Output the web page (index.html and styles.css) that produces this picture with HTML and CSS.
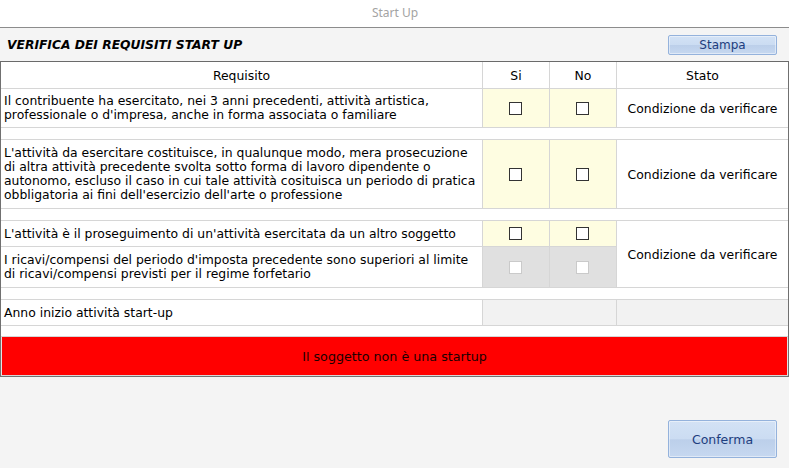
FILE: index.html
```html
<!DOCTYPE html>
<html lang="it">
<head>
<meta charset="utf-8">
<title>Start Up</title>
<link rel="stylesheet" href="styles.css">
</head>
<body>
<div class="window">
  <div class="titlebar">Start Up</div>
  <div class="toolbar">
    <h1 class="heading">VERIFICA DEI REQUISITI START UP</h1>
    <button class="btn btn-small">Stampa</button>
  </div>
  <div class="frame">
    <div class="grid">
      <div class="cell head">Requisito</div>
      <div class="cell head">Si</div>
      <div class="cell head">No</div>
      <div class="cell head">Stato</div>

      <div class="cell text">Il contribuente ha esercitato, nei 3 anni precedenti, attività artistica, professionale o d'impresa, anche in forma associata o familiare</div>
      <div class="cell check"><span class="box"></span></div>
      <div class="cell check"><span class="box"></span></div>
      <div class="cell state">Condizione da verificare</div>

      <div class="cell spacer"></div>

      <div class="cell text">L'attività da esercitare costituisce, in qualunque modo, mera prosecuzione di altra attività precedente svolta sotto forma di lavoro dipendente o autonomo, escluso il caso in cui tale attività cosituisca un periodo di pratica obbligatoria ai fini dell'esercizio dell'arte o professione</div>
      <div class="cell check"><span class="box"></span></div>
      <div class="cell check"><span class="box"></span></div>
      <div class="cell state">Condizione da verificare</div>

      <div class="cell spacer"></div>

      <div class="cell text">L'attività è il proseguimento di un'attività esercitata da un altro soggetto</div>
      <div class="cell check"><span class="box"></span></div>
      <div class="cell check"><span class="box"></span></div>
      <div class="cell state span2">Condizione da verificare</div>
      <div class="cell text">I ricavi/compensi del periodo d'imposta precedente sono superiori al limite di ricavi/compensi previsti per il regime forfetario</div>
      <div class="cell check disabled"><span class="box"></span></div>
      <div class="cell check disabled"><span class="box"></span></div>

      <div class="cell spacer"></div>

      <div class="cell text">Anno inizio attività start-up</div>
      <div class="cell blank wide"></div>
      <div class="cell blank"></div>

      <div class="cell spacer"></div>

      <div class="cell banner">Il soggetto non è una startup</div>
    </div>
  </div>
  <div class="footer">
    <button class="btn btn-large">Conferma</button>
  </div>
</div>
</body>
</html>
```
FILE: styles.css
```css
* { box-sizing: border-box; }
html, body { margin: 0; padding: 0; }
body {
  width: 789px;
  height: 468px;
  background: #f4f4f4;
  font-family: "DejaVu Sans", Verdana, sans-serif;
  font-size: 12.4px;
  color: #000;
  overflow: hidden;
}
.window { display: flex; flex-direction: column; }
.titlebar {
  height: 28px;
  background: #fff;
  border-bottom: 1px solid #8c8c8c;
  display: flex;
  align-items: center;
  justify-content: center;
  padding-bottom: 2px;
  padding-left: 1px;
  font-family: "Noto Sans", "Open Sans", sans-serif;
  font-size: 12px;
  color: #a3a3a3;
}
.toolbar {
  height: 33px;
  display: flex;
  align-items: center;
  justify-content: space-between;
  padding: 0 12px 0 7px;
}
.heading {
  margin: 0;
  font-size: 12.3px;
  font-weight: bold;
  font-style: italic;
  color: #000;
  padding-top: 1px;
}
.btn {
  font-family: "DejaVu Sans", Verdana, sans-serif;
  font-size: 12px;
  color: #1d3d7e;
  border: 1px solid #94b2dc;
  border-radius: 2px;
  background: linear-gradient(#d3e2f5 0%, #cbdcf2 50%, #bccfea 52%, #c6d8f0 100%);
  box-shadow: inset 0 0 0 1px rgba(255,255,255,0.45);
  padding: 0;
  cursor: default;
}
.btn-small { width: 109px; height: 20px; margin-top: 1px; }
.btn-large { width: 109px; height: 38px; font-size: 12.5px; }
.frame {
  border: 1px solid #707070;
  border-top-color: #6a6a6a;
  height: 316px;
  background: #fff;
}
.grid {
  display: grid;
  grid-template-columns: 481px 66px 66px 171px;
  grid-template-rows: 26px 38px 11px 68px 11px 25px 40px 11px 25px 10px 38px;
  gap: 1px;
  background: #d6d6d6;
  padding-bottom: 1px;
}
.cell {
  background: #fff;
  display: flex;
  align-items: center;
  min-width: 0;
}
.head { justify-content: center; padding-top: 1px; }
.text { padding: 0 3px; line-height: 14px; }
.check { justify-content: center; background: #fefde1; }
.check.disabled { background: #e0e0e0; }
.box {
  width: 13px;
  height: 13px;
  border: 1px solid #333;
  background: #fff;
  margin-left: -1px;
}
.disabled .box { border-color: #cacaca; }
.state { justify-content: center; }
.span2 { grid-row: span 2; }
.spacer { grid-column: 1 / -1; }
.blank { background: #f2f2f2; }
.wide { grid-column: span 2; }
.banner {
  grid-column: 1 / -1;
  background: #ff0000;
  justify-content: center;
  font-size: 12.7px;
  color: #1a0000;
  box-shadow: inset 1px 0 0 #e4e4e4, inset -1px 0 0 #e4e4e4;
}
.footer {
  display: flex;
  justify-content: flex-end;
  padding: 43px 12px 0 0;
}
```
